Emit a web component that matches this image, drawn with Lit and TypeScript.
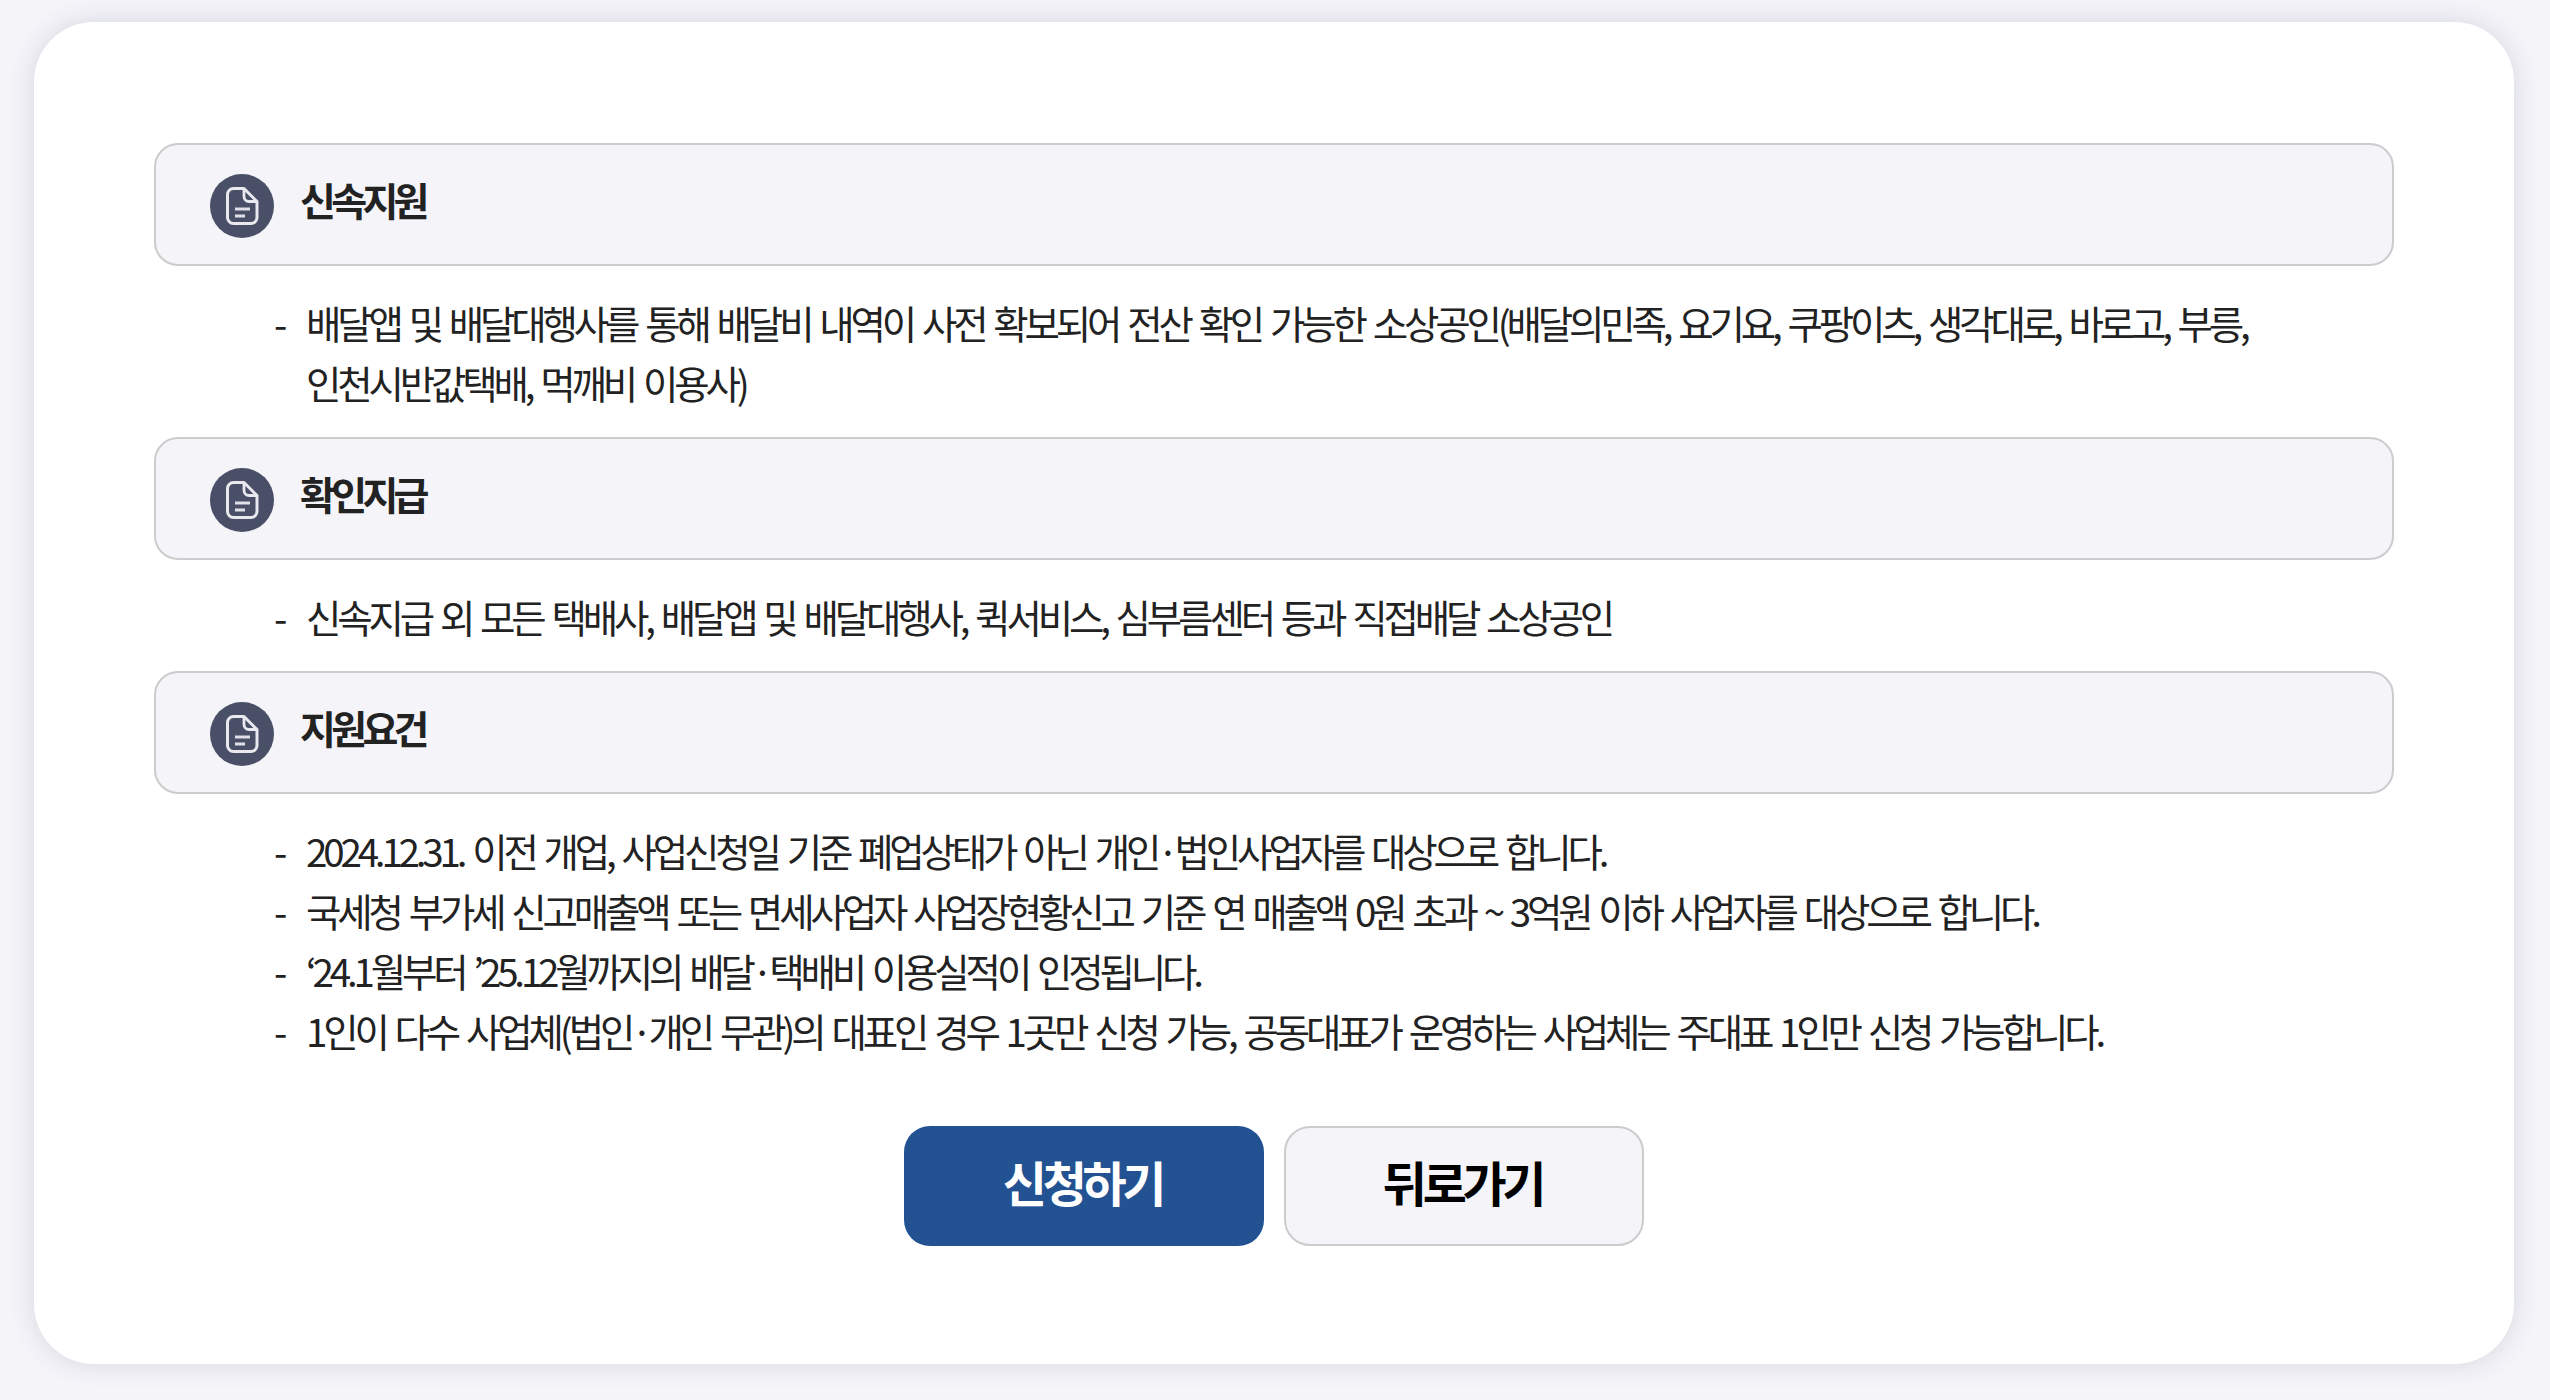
import { LitElement, html, css } from "lit";
import { customElement } from "lit/decorators.js";

const sections = [
  { title: "신속지원", items: ["배달앱 및 배달대행사를 통해 배달비 내역이 사전 확보되어 전산 확인 가능한 소상공인(배달의민족, 요기요, 쿠팡이츠, 생각대로, 바로고, 부릉, 인천시반값택배, 먹깨비 이용사)"] },
  { title: "확인지급", items: ["신속지급 외 모든 택배사, 배달앱 및 배달대행사, 퀵서비스, 심부름센터 등과 직접배달 소상공인"] },
  { title: "지원요건", items: [
    "2024.12.31. 이전 개업, 사업신청일 기준 폐업상태가 아닌 개인·법인사업자를 대상으로 합니다.",
    "국세청 부가세 신고매출액 또는 면세사업자 사업장현황신고 기준 연 매출액 0원 초과 ~ 3억원 이하 사업자를 대상으로 합니다.",
    "‘24.1월부터 ’25.12월까지의 배달·택배비 이용실적이 인정됩니다.",
    "1인이 다수 사업체(법인·개인 무관)의 대표인 경우 1곳만 신청 가능, 공동대표가 운영하는 사업체는 주대표 1인만 신청 가능합니다.",
  ] },
];

@customElement("app-root")
export class AppRoot extends LitElement {
  static styles = css`
    :host { display: block; width: 2550px; height: 1400px; background: #f4f4f9; overflow: hidden;
      font-family: "Noto Sans CJK KR", "Noto Sans", sans-serif; color: #222; }
    .wrap { padding: 22px 36px 36px 34px; box-sizing: border-box; height: 100%; }
    .card { background: #fff; border-radius: 60px; height: 1342px; box-sizing: border-box; padding: 121px 120px 0;
      box-shadow: 0 0 26px rgba(70, 70, 100, 0.16); }
    .head { display: flex; align-items: center; height: 123px; box-sizing: border-box; background: #f4f4f9;
      border: 2px solid #ccc; border-radius: 24px; padding-left: 54px; }
    .icon { width: 64px; height: 64px; flex: none; margin-top: 2px; }
    .title { margin-left: 26px; font-size: 39px; font-weight: 700; letter-spacing: -0.12em; line-height: 1; margin-top: -10px; color: #222; }
    ul { list-style: none; margin: 0; padding: 26px 0 25px 120px; }
    li { position: relative; padding-left: 32px; font-size: 38.5px; line-height: 60px; letter-spacing: -0.108em; word-spacing: 4.4px; font-weight: 400; color: #222; word-break: keep-all; }
    li::before { content: "-"; position: absolute; left: 0; top: 0; }
    .btns { display: flex; justify-content: center; gap: 20px; margin-top: 41px; }
    .btn { width: 360px; height: 120px; box-sizing: border-box; display: flex; align-items: center; justify-content: center;
      border-radius: 26px; font-size: 48px; font-weight: 700; letter-spacing: -0.09em; padding-bottom: 10px; padding-right: 3px; }
    .primary { background: #225292; color: #fff; }
    .secondary { background: #f4f4f9; border: 2px solid #ccc; color: #000; }
  `;

  render() {
    return html`<div class="wrap"><div class="card">
      ${sections.map((s) => html`
        <div class="head">
          <svg class="icon" viewBox="0 0 64 64">
            <circle cx="32" cy="32" r="32" fill="#4a4f68"/>
            <path d="M23.500 14.500h10.500L47 27.500V43.500a6 6 0 0 1-6 6H23.500a6 6 0 0 1-6-6V20.500a6 6 0 0 1 6-6z" fill="none" stroke="#e8e8ee" stroke-width="3" stroke-linejoin="round"/>
            <path d="M34 15v7.500a5 5 0 0 0 5 5h7.500" fill="none" stroke="#e8e8ee" stroke-width="2.800"/>
            <path d="M25 35h15M25 42h10" fill="none" stroke="#e0e0e8" stroke-width="3"/>
          </svg>
          <div class="title">${s.title}</div>
        </div>
        <ul>${s.items.map((i) => html`<li>${i}</li>`)}</ul>
      `)}
      <div class="btns">
        <div class="btn primary">신청하기</div>
        <div class="btn secondary">뒤로가기</div>
      </div>
    </div></div>`;
  }
}
